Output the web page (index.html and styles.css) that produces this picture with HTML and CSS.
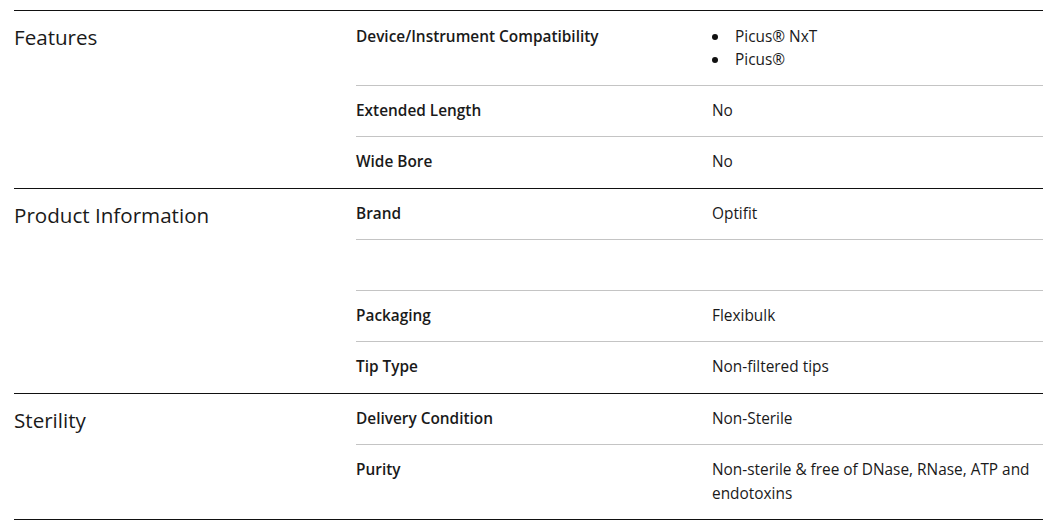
FILE: index.html
```html
<!DOCTYPE html>
<html>
<head>
<meta charset="utf-8">
<link rel="stylesheet" href="styles.css">
</head>
<body>
<div class="specs">
  <section class="group">
    <h3 class="group-title">Features</h3>
    <div class="rows">
      <div class="row">
        <div class="label">Device/Instrument Compatibility</div>
        <ul class="value bullets">
          <li>Picus® NxT</li>
          <li>Picus®</li>
        </ul>
      </div>
      <div class="row"><div class="label">Extended Length</div><div class="value">No</div></div>
      <div class="row"><div class="label">Wide Bore</div><div class="value">No</div></div>
    </div>
  </section>
  <section class="group">
    <h3 class="group-title">Product Information</h3>
    <div class="rows">
      <div class="row"><div class="label">Brand</div><div class="value">Optifit</div></div>
      <div class="row"><div class="label"></div><div class="value"></div></div>
      <div class="row"><div class="label">Packaging</div><div class="value">Flexibulk</div></div>
      <div class="row"><div class="label">Tip Type</div><div class="value">Non-filtered tips</div></div>
    </div>
  </section>
  <section class="group last">
    <h3 class="group-title">Sterility</h3>
    <div class="rows">
      <div class="row"><div class="label">Delivery Condition</div><div class="value">Non-Sterile</div></div>
      <div class="row"><div class="label">Purity</div><div class="value">Non-sterile &amp; free of DNase, RNase, ATP and endotoxins</div></div>
    </div>
  </section>
</div>
</body>
</html>
```
FILE: styles.css
```css
* { box-sizing: border-box; }
html, body { margin: 0; padding: 0; background: #fff; }
body {
  font-family: "Open Sans", "Liberation Sans", sans-serif;
  color: #1a1a1a;
  font-size: 15.4px;
  line-height: 24px;
}
.specs {
  padding: 10px 0 0 14px;
}
.group {
  display: grid;
  grid-template-columns: 342px 1fr;
  border-top: 1px solid #111;
}
.group.last { border-bottom: 1px solid #111; }
.group-title {
  margin: 0;
  padding: 13px 0 0 0;
  font-size: 20.6px;
  font-weight: 400;
  line-height: 26px;
}
.rows { display: flex; flex-direction: column; }
.row {
  display: grid;
  grid-template-columns: 356px 1fr;
  min-height: 51.3px;
  padding: 13px 0 13.3px 0;
  border-top: 1px solid #c4c4c4;
}
.row:first-child { border-top: none; min-height: 50.3px; }
.group:first-child .row:first-child { padding: 14px 0 14px 0; }
.label { font-weight: 600; }
.value { padding-right: 10px; }
.bullets {
  list-style: none;
  margin: 0;
  padding: 0;
  line-height: 23px;
}
.bullets li {
  display: flex;
  align-items: center;
  gap: 17px;
}
.bullets li::before {
  content: "";
  width: 6px;
  height: 6px;
  border-radius: 50%;
  background: #111;
  flex: none;
}
```
